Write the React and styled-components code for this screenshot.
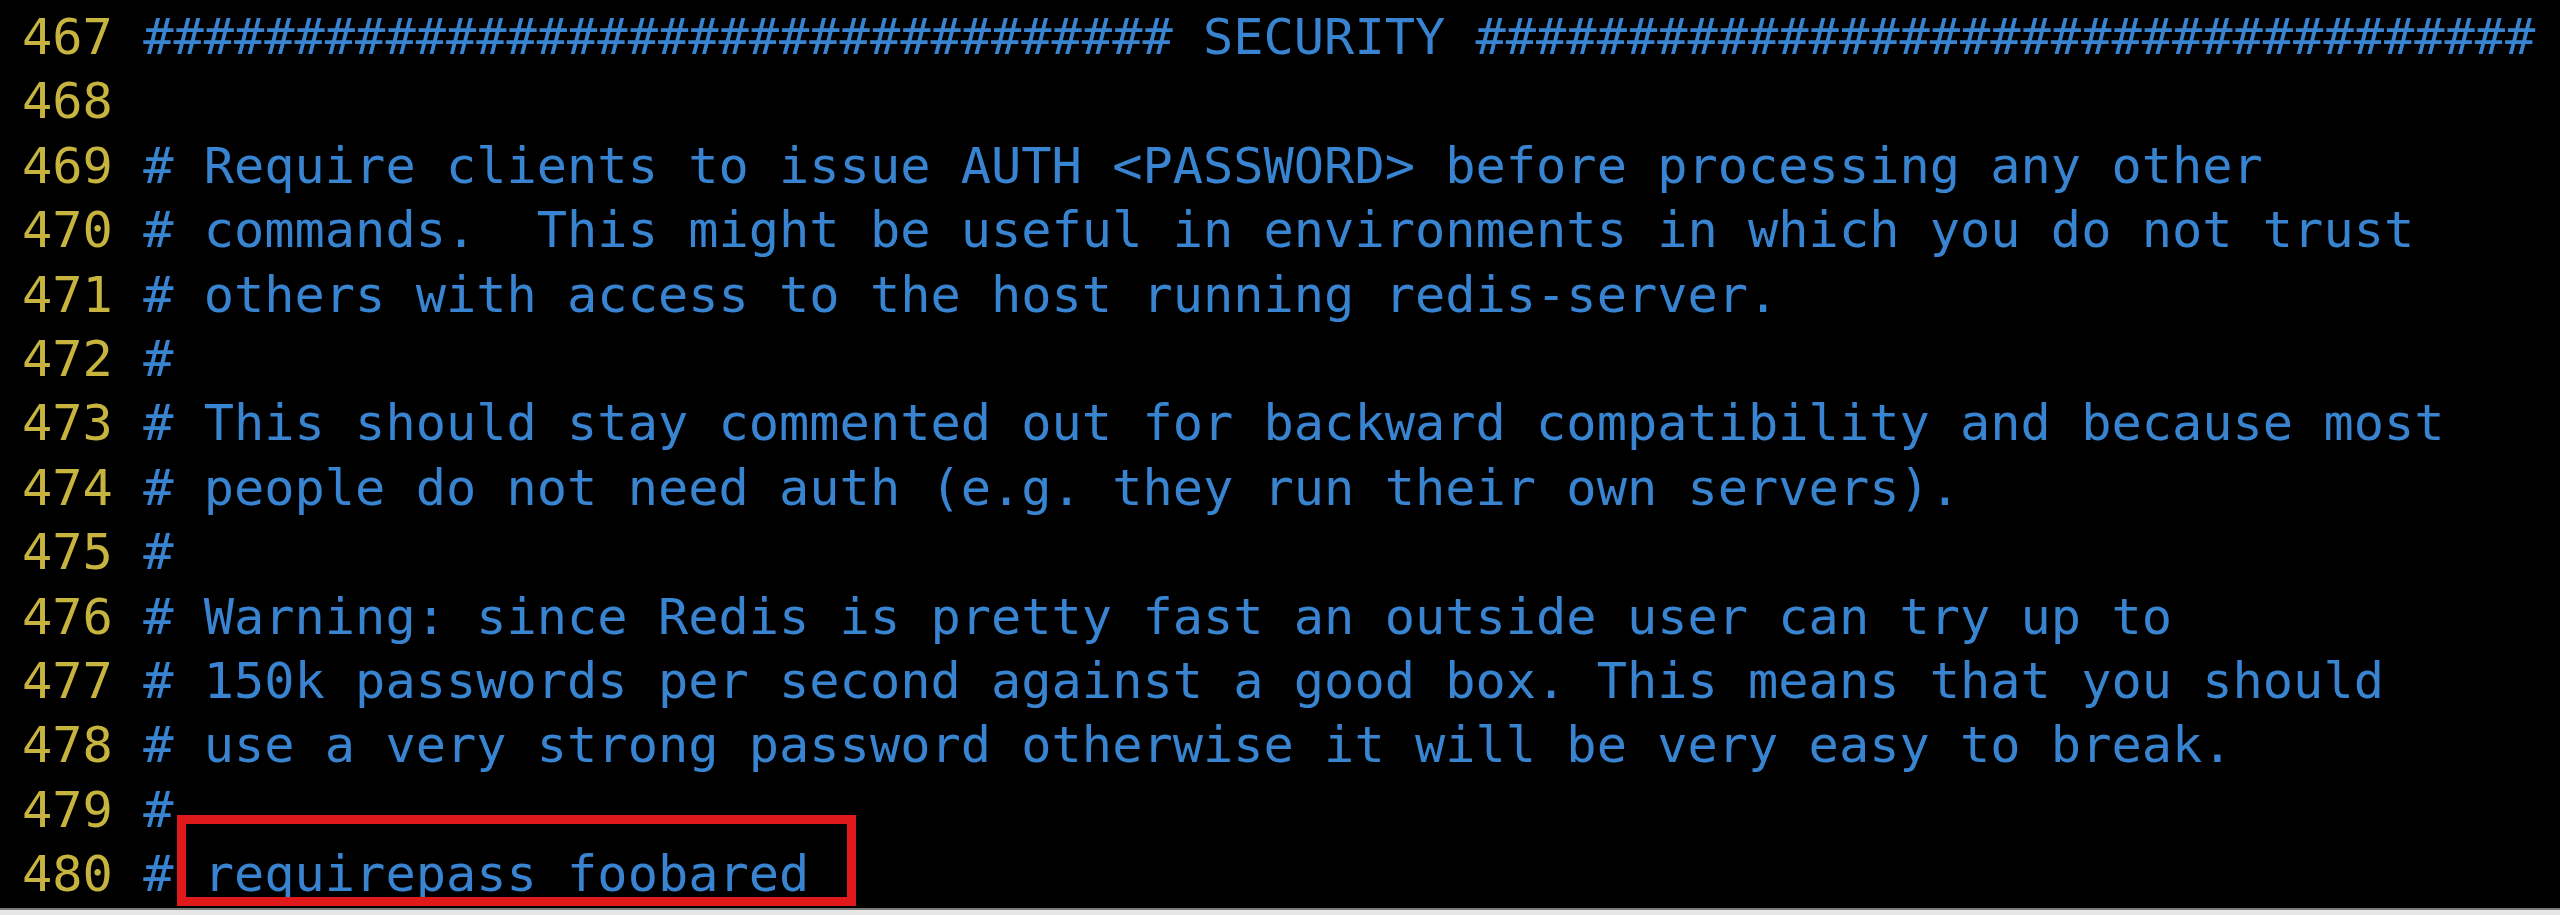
import React from 'react'
import styled, { createGlobalStyle } from 'styled-components'

const GlobalStyle = createGlobalStyle`
  html, body {
    margin: 0;
    padding: 0;
    background: #e6e6e6;
  }
`

const lines = [
  { n: 467, text: '################################## SECURITY ###################################' },
  { n: 468, text: '' },
  { n: 469, text: '# Require clients to issue AUTH <PASSWORD> before processing any other' },
  { n: 470, text: '# commands.  This might be useful in environments in which you do not trust' },
  { n: 471, text: '# others with access to the host running redis-server.' },
  { n: 472, text: '#' },
  { n: 473, text: '# This should stay commented out for backward compatibility and because most' },
  { n: 474, text: '# people do not need auth (e.g. they run their own servers).' },
  { n: 475, text: '#' },
  { n: 476, text: '# Warning: since Redis is pretty fast an outside user can try up to' },
  { n: 477, text: '# 150k passwords per second against a good box. This means that you should' },
  { n: 478, text: '# use a very strong password otherwise it will be very easy to break.' },
  { n: 479, text: '#' },
]

const Terminal = styled.div`
  height: 903px;
  background: #000;
  border-bottom: 2px solid #7c7c7c;
  padding: 5px 0 0 22px;
  overflow: hidden;
  font-family: 'DejaVu Sans Mono', 'Liberation Mono', monospace;
  font-size: 50.3px;
  line-height: 64.4px;
  filter: blur(0.6px);
`

const Row = styled.div`
  display: flex;
  white-space: pre;
  height: 64.4px;
`

const LineNo = styled.span`
  color: #c6b43e;
  width: 4ch;
  flex: none;
`

const Code = styled.span`
  color: #3884d0;
`

const Marked = styled.span`
  position: relative;

  &::after {
    content: '';
    position: absolute;
    left: -27px;
    right: -47px;
    top: -29px;
    bottom: -3px;
    border: 9px solid #e01a1a;
  }
`

const App = () => (
  <>
    <GlobalStyle />
    <Terminal>
      {lines.map(l => (
        <Row key={l.n}>
          <LineNo>{l.n}</LineNo>
          <Code>{l.text}</Code>
        </Row>
      ))}
      <Row>
        <LineNo>480</LineNo>
        <Code>
          {'# '}
          <Marked>requirepass foobared</Marked>
        </Code>
      </Row>
    </Terminal>
  </>
)

export default App
